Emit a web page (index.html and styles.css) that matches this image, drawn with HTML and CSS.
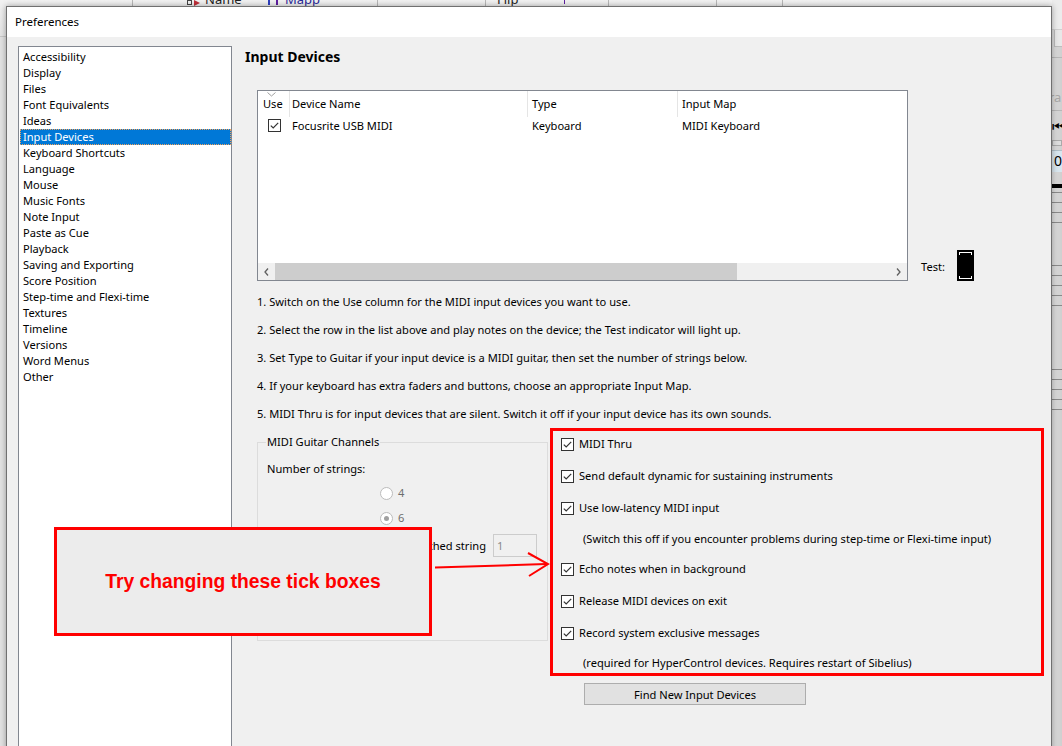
FILE: index.html
```html
<!DOCTYPE html>
<html>
<head>
<meta charset="utf-8">
<title>Preferences</title>
<link rel="stylesheet" href="styles.css">
</head>
<body>
<div class="desktop">
  <div class="app-main">
    <div class="app-toolbar">
      <span class="tb-sep tb-s1"></span>
      <span class="tb-icon-sq"></span><span class="tb-icon-tri"></span>
      <span class="tb-text tb-name">Name</span>
      <span class="tb-mark"></span>
      <span class="tb-text tb-map">Mapp</span>
      <span class="tb-sep tb-s2"></span>
      <span class="tb-sep tb-s3"></span>
      <span class="tb-text tb-flip">Flip</span>
      <span class="tb-mark2"></span>
      <span class="tb-sep tb-s4"></span>
      <span class="tb-sep tb-s5"></span>
      <span class="tb-sep tb-s6"></span>
    </div>
    <div class="app-score"></div>
  </div>
  <div class="app-side">
    <div class="s-top"></div>
    <div class="s-btn"></div>
    <div class="s-line s-gap10"></div>
    <div class="s-label">ra</div>
    <div class="s-line"></div>
    <div class="s-play">&#x23EE;</div>
    <div class="s-small"></div>
    <div class="s-num">0</div>
    <div class="s-black"></div>
    <div class="staff staff1"><i></i><i></i><i></i><i></i></div>
    <div class="staff staff2"><i></i><i></i><i></i><i></i><i></i></div>
    <div class="staff staff3"><i></i><i></i><i></i><i></i><i></i></div>
  </div>

  <div class="dialog">
    <div class="titlebar">Preferences</div>
    <div class="dlg-body">
      <ul class="cat-list">
        <li>Accessibility</li>
        <li>Display</li>
        <li>Files</li>
        <li>Font Equivalents</li>
        <li>Ideas</li>
        <li class="selected">Input Devices</li>
        <li>Keyboard Shortcuts</li>
        <li>Language</li>
        <li>Mouse</li>
        <li>Music Fonts</li>
        <li>Note Input</li>
        <li>Paste as Cue</li>
        <li>Playback</li>
        <li>Saving and Exporting</li>
        <li>Score Position</li>
        <li>Step-time and Flexi-time</li>
        <li>Textures</li>
        <li>Timeline</li>
        <li>Versions</li>
        <li>Word Menus</li>
        <li>Other</li>
      </ul>

      <div class="pane">
        <h1 class="pane-title">Input Devices</h1>

        <div class="devices-row">
          <div class="device-table">
            <div class="dt-header">
              <div class="cell c-use">Use<svg class="sort" width="9" height="5" viewBox="0 0 9 5"><path d="M0.5 0.5 L4.5 4 L8.5 0.5" fill="none" stroke="#a0a0a0" stroke-width="1"/></svg></div>
              <div class="cell c-name sep">Device Name</div>
              <div class="cell c-type sep">Type</div>
              <div class="cell c-map sep">Input Map</div>
            </div>
            <div class="dt-row">
              <div class="cell c-use"><svg class="cb" width="13" height="13" viewBox="0 0 13 13"><rect x="0.5" y="0.5" width="12" height="12" fill="#fff" stroke="#333"/><path d="M2.8 6.6 L5.2 9 L10.2 3.8" fill="none" stroke="#333" stroke-width="1.2"/></svg></div>
              <div class="cell c-name">Focusrite USB MIDI</div>
              <div class="cell c-type r-type">Keyboard</div>
              <div class="cell c-map r-map">MIDI Keyboard</div>
            </div>
            <div class="dt-spacer"></div>
            <div class="hscroll">
              <div class="sb-btn"><svg width="5" height="8" viewBox="0 0 5 8"><path d="M4 0.5 L1 4 L4 7.5" fill="none" stroke="#606060" stroke-width="1.3"/></svg></div>
              <div class="sb-track"><div class="sb-thumb"></div></div>
              <div class="sb-btn"><svg width="5" height="8" viewBox="0 0 5 8"><path d="M1 0.5 L4 4 L1 7.5" fill="none" stroke="#606060" stroke-width="1.3"/></svg></div>
            </div>
          </div>
          <div class="test">
            <span class="test-label">Test:</span>
            <div class="test-led"></div>
          </div>
        </div>

        <div class="instructions">
          <p>1. Switch on the Use column for the MIDI input devices you want to use.</p>
          <p>2. Select the row in the list above and play notes on the device; the Test indicator will light up.</p>
          <p>3. Set Type to Guitar if your input device is a MIDI guitar, then set the number of strings below.</p>
          <p>4. If your keyboard has extra faders and buttons, choose an appropriate Input Map.</p>
          <p>5. MIDI Thru is for input devices that are silent. Switch it off if your input device has its own sounds.</p>
        </div>

        <div class="lower">
          <fieldset class="guitar">
            <legend>MIDI Guitar Channels</legend>
            <div class="num-label">Number of strings:</div>
            <div class="radio-row"><span class="radio"></span><span class="radio-text">4</span></div>
            <div class="radio-row r2"><span class="radio on"></span><span class="radio-text">6</span></div>
            <div class="chan-row">
              <span class="chan-label">Channel of highest-pitched string</span>
              <span class="chan-input">1</span>
            </div>
          </fieldset>

          <div class="midi-opts">
            <div class="opts-box">
              <div class="opt"><svg class="cb" width="13" height="13" viewBox="0 0 13 13"><rect x="0.5" y="0.5" width="12" height="12" fill="#fff" stroke="#333"/><path d="M2.8 6.6 L5.2 9 L10.2 3.8" fill="none" stroke="#333" stroke-width="1.2"/></svg><span>MIDI Thru</span></div>
              <div class="opt"><svg class="cb" width="13" height="13" viewBox="0 0 13 13"><rect x="0.5" y="0.5" width="12" height="12" fill="#fff" stroke="#333"/><path d="M2.8 6.6 L5.2 9 L10.2 3.8" fill="none" stroke="#333" stroke-width="1.2"/></svg><span>Send default dynamic for sustaining instruments</span></div>
              <div class="opt"><svg class="cb" width="13" height="13" viewBox="0 0 13 13"><rect x="0.5" y="0.5" width="12" height="12" fill="#fff" stroke="#333"/><path d="M2.8 6.6 L5.2 9 L10.2 3.8" fill="none" stroke="#333" stroke-width="1.2"/></svg><span>Use low-latency MIDI input</span></div>
              <div class="note">(Switch this off if you encounter problems during step-time or Flexi-time input)</div>
              <div class="opt after-note"><svg class="cb" width="13" height="13" viewBox="0 0 13 13"><rect x="0.5" y="0.5" width="12" height="12" fill="#fff" stroke="#333"/><path d="M2.8 6.6 L5.2 9 L10.2 3.8" fill="none" stroke="#333" stroke-width="1.2"/></svg><span>Echo notes when in background</span></div>
              <div class="opt"><svg class="cb" width="13" height="13" viewBox="0 0 13 13"><rect x="0.5" y="0.5" width="12" height="12" fill="#fff" stroke="#333"/><path d="M2.8 6.6 L5.2 9 L10.2 3.8" fill="none" stroke="#333" stroke-width="1.2"/></svg><span>Release MIDI devices on exit</span></div>
              <div class="opt"><svg class="cb" width="13" height="13" viewBox="0 0 13 13"><rect x="0.5" y="0.5" width="12" height="12" fill="#fff" stroke="#333"/><path d="M2.8 6.6 L5.2 9 L10.2 3.8" fill="none" stroke="#333" stroke-width="1.2"/></svg><span>Record system exclusive messages</span></div>
              <div class="note note-last">(required for HyperControl devices. Requires restart of Sibelius)</div>
            </div>
            <button class="find-btn">Find New Input Devices</button>
          </div>
        </div>
      </div>
    </div>

    <div class="callout">Try changing these tick boxes</div>
    <svg class="arrow" width="124" height="30" viewBox="0 0 124 30">
      <path d="M5 17.5 L116 14" fill="none" stroke="#ff0000" stroke-width="2"/>
      <path d="M98 3 L118 14 L99 26" fill="none" stroke="#ff0000" stroke-width="2"/>
    </svg>
  </div>
</div>
</body>
</html>
```

FILE: styles.css
```css
* { box-sizing: border-box; }

html, body {
  margin: 0;
  padding: 0;
}

body {
  font-family: "Noto Sans", "Open Sans", sans-serif;
  font-size: 11.1px;
  color: #000;
  background: #dcdcdc;
}

.desktop {
  position: relative;
  width: 1062px;
  height: 746px;
  overflow: hidden;
  display: flex;
}

/* ---------- application behind the dialog ---------- */
.app-main {
  flex: 1;
  display: flex;
  flex-direction: column;
  background: #e2e2e2;
}

.app-toolbar {
  height: 37px;
  position: relative;
  background: linear-gradient(#f2f2f2, #e4e4e4);
  border-bottom: 1px solid #c8c8c8;
  overflow: hidden;
}

.tb-sep {
  position: absolute;
  top: 0;
  width: 1px;
  height: 30px;
  background: #b8b8b8;
}
.tb-s1 { left: 132px; }
.tb-s2 { left: 377px; }
.tb-s3 { left: 485px; }
.tb-s4 { left: 608px; }
.tb-s5 { left: 716px; }
.tb-s6 { left: 782px; }

.tb-icon-sq {
  position: absolute;
  left: 187px;
  top: 0;
  width: 5px;
  height: 5px;
  border: 1px solid #444;
}
.tb-icon-tri {
  position: absolute;
  left: 194px;
  top: 0;
  width: 0;
  height: 0;
  border-top: 3px solid transparent;
  border-bottom: 3px solid transparent;
  border-left: 6px solid #c0303a;
}
.tb-text {
  position: absolute;
  top: -8px;
  font-size: 13px;
  line-height: 14px;
  color: #222;
}
.tb-name { left: 205px; }
.tb-map { left: 285px; color: #2a2a9a; }
.tb-flip { left: 497px; }
.tb-mark {
  position: absolute;
  left: 268px;
  top: 0;
  width: 10px;
  height: 5px;
  border-left: 2px solid #3040c0;
  border-right: 2px solid #6020a0;
}
.tb-mark2 {
  position: absolute;
  left: 564px;
  top: 0;
  width: 1px;
  height: 4px;
  background: #6020a0;
}

.app-score { flex: 1; }

.app-side {
  width: 10px;
  display: flex;
  flex-direction: column;
  background: linear-gradient(90deg, #dedede, #cfcfcf);
  overflow: hidden;
}
.s-top { height: 30px; background: #ececec; border-bottom: 1px solid #d0d0d0; }
.s-btn { height: 17px; background: #e8e8e8; border-left: 1px solid #bdbdbd; border-bottom: 1px solid #bdbdbd; margin-left: 2px; }
.s-line { height: 1px; background: #b8b8b8; }
.s-gap10 { margin-top: 10px; }
.s-label {
  height: 52px;
  padding-top: 31px;
  font-size: 13px;
  line-height: 16px;
  color: #a8a8a8;
  white-space: nowrap;
  margin-left: -3px;
}
.s-play {
  height: 16px;
  margin-top: 7px;
  font-size: 14px;
  line-height: 16px;
  color: #000;
  white-space: nowrap;
}
.s-small { height: 6px; margin-top: 6px; border: 1px solid #aaa; background: #ddd; }
.s-num {
  height: 22px;
  margin-top: 4px;
  background: #d8e6ee;
  border-top: 1px solid #b0c0c8;
  font-size: 14px;
  line-height: 20px;
  padding-left: 2px;
}
.s-black { height: 4px; margin-top: 12px; background: #000; }
.staff { display: flex; flex-direction: column; gap: 9px; }
.staff i { display: block; height: 1px; background: #8a8a8a; }
.staff1 { margin-top: 4px; }
.staff2 { margin-top: 42px; }
.staff3 { margin-top: 63px; }

/* ---------- dialog ---------- */
.dialog {
  position: absolute;
  left: 6px;
  top: 6px;
  width: 1046px;
  height: 760px;
  border: 1px solid #707070;
  box-shadow: 0 0 6px rgba(0, 0, 0, 0.35);
  background: #f0f0f0;
  display: flex;
  flex-direction: column;
}

.titlebar {
  height: 30px;
  line-height: 30px;
  padding-left: 8px;
  background: #fff;
  font-size: 11.5px;
  color: #000;
  flex: none;
}

.dlg-body {
  flex: 1;
  display: flex;
  align-items: flex-start;
  background: #f0f0f0;
}

.cat-list {
  list-style: none;
  margin: 9px 0 0 11px;
  padding: 2px 0 0;
  width: 214px;
  height: 720px;
  background: #fff;
  border: 1px solid #828790;
  flex: none;
}
.cat-list li {
  height: 16px;
  line-height: 16px;
  margin: 0 0 0 1px;
  padding-left: 3px;
  white-space: nowrap;
}
.cat-list li.selected {
  background: #0078d7;
  color: #fff;
  outline: 1px dotted #f3a35a;
  outline-offset: -1px;
}

.pane {
  margin-left: 13px;
  padding-top: 10px;
  flex: 1;
  display: flex;
  flex-direction: column;
}

.pane-title {
  margin: 0;
  font-size: 14px;
  font-weight: bold;
  line-height: 20px;
}

.devices-row {
  margin: 23px 0 0 12px;
  display: flex;
  align-items: flex-end;
}

.device-table {
  width: 651px;
  height: 191px;
  border: 1px solid #828790;
  background: #fff;
  display: flex;
  flex-direction: column;
}

.dt-header, .dt-row {
  display: flex;
}
.dt-header {
  height: 26px;
  line-height: 26px;
}
.cell {
  white-space: nowrap;
  overflow: hidden;
}
.c-use { width: 31px; padding-left: 5px; position: relative; }
.c-name { width: 238px; padding-left: 2px; }
.c-type { width: 150px; padding-left: 4px; }
.c-map { flex: 1; padding-left: 4px; }
.sep { border-left: 1px solid #e5e5e5; }

.sort {
  position: absolute;
  left: 9px;
  top: 1px;
}

.dt-row {
  height: 17px;
  line-height: 17px;
}
.dt-row .c-use { padding-left: 10px; }
.dt-row .c-name { padding-left: 3px; }
.r-type, .r-map { padding-left: 5px; }
.cb { display: block; flex: none; }
.dt-row .cb { margin-top: 2px; }

.dt-spacer { flex: 1; }

.hscroll {
  height: 17px;
  display: flex;
  background: #f0f0f0;
}
.sb-btn {
  width: 17px;
  display: flex;
  align-items: center;
  justify-content: center;
}
.sb-track {
  flex: 1;
  display: flex;
  align-items: stretch;
}
.sb-thumb {
  width: 462px;
  background: #cdcdcd;
}

.test {
  width: 53px;
  height: 31px;
  margin-left: 13px;
  display: flex;
  align-items: center;
  justify-content: space-between;
}
.test-label { line-height: 16px; padding-top: 3px; }
.test-led {
  width: 17px;
  height: 31px;
  background: #000;
  position: relative;
}
.test-led::before,
.test-led::after {
  content: "";
  position: absolute;
  left: 2px;
  right: 2px;
  height: 2px;
  border-left: 1px solid #fff;
  border-right: 1px solid #fff;
}
.test-led::before { top: 2px; border-top: 1px solid #fff; }
.test-led::after { bottom: 2px; border-bottom: 1px solid #fff; }

.instructions {
  margin: 7px 0 0 12px;
}
.instructions p {
  margin: 0;
  line-height: 28px;
  white-space: nowrap;
}

.lower {
  margin-left: 12px;
  display: flex;
  align-items: flex-start;
}

.guitar {
  margin: 6px 0 0 0;
  width: 291px;
  height: 207px;
  padding: 0 10px 0 8px;
  border: 1px solid #dcdcdc;
  flex: none;
}
.guitar legend {
  padding: 0 1px;
  line-height: 16px;
}
.num-label {
  margin: 11px 0 0 1px;
  line-height: 16px;
}
.radio-row {
  margin: 8px 0 0 114px;
  height: 16px;
  display: flex;
  align-items: center;
  gap: 5px;
}
.radio-row.r2 { margin-top: 9px; }
.radio {
  width: 13px;
  height: 13px;
  border-radius: 50%;
  border: 1px solid #bcbcbc;
  background: #fff;
  display: flex;
  align-items: center;
  justify-content: center;
}
.radio.on::after {
  content: "";
  width: 5px;
  height: 5px;
  border-radius: 50%;
  background: #a0a0a0;
}
.radio-text { color: #6d6d6d; line-height: 16px; }

.chan-row {
  margin-top: 8px;
  height: 23px;
  display: flex;
  justify-content: flex-end;
  align-items: center;
  gap: 7px;
}
.chan-label { white-space: nowrap; }
.chan-input {
  width: 44px;
  height: 23px;
  border: 1px solid #cccccc;
  background: #f0f0f0;
  color: #8a8a8a;
  line-height: 21px;
  padding-left: 3px;
  flex: none;
}

.midi-opts {
  margin-left: 2px;
  width: 494px;
  flex: none;
}
.opts-box {
  height: 248px;
  border: 3px solid #ff0000;
  padding: 5px 0 0 8px;
  display: flex;
  flex-direction: column;
  gap: 16px;
}
.opt {
  height: 16px;
  display: flex;
  align-items: center;
  gap: 5px;
  white-space: nowrap;
}
.opt span { line-height: 16px; }
.note {
  height: 16px;
  line-height: 16px;
  padding-left: 22px;
  margin-top: -1px;
  white-space: nowrap;
}
.opt.after-note { margin-top: -2px; }
.note.note-last { margin-top: -2px; }

.find-btn {
  display: block;
  margin: 7px 0 0 34px;
  width: 222px;
  height: 22px;
  padding: 0;
  background: #e1e1e1;
  border: 1px solid #adadad;
  font-family: inherit;
  font-size: 11.1px;
  color: #000;
}

/* ---------- annotation overlay ---------- */
.callout {
  position: absolute;
  left: 47px;
  top: 520px;
  width: 378px;
  height: 109px;
  border: 3px solid #ff0000;
  background: #ececec;
  display: flex;
  align-items: center;
  justify-content: center;
  font-family: "Liberation Sans", Arial, sans-serif;
  font-weight: bold;
  font-size: 19.3px;
  color: #ff0000;
}

.arrow {
  position: absolute;
  left: 423px;
  top: 543px;
}
```
